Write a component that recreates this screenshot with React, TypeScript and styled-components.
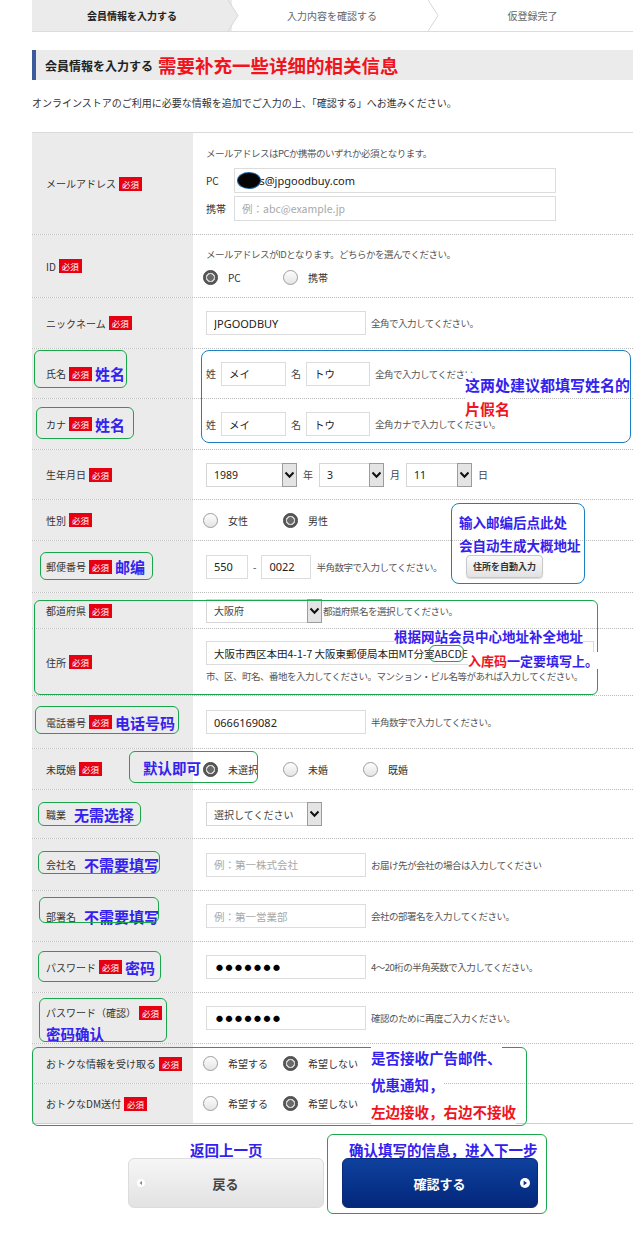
import React from "react";
import styled, { createGlobalStyle, css } from "styled-components";

const JP = `"Noto Sans CJK JP", "Noto Sans", sans-serif`;
const LATIN = `"Noto Sans", "Noto Sans CJK JP", sans-serif`;
const SC = `"Noto Sans CJK SC", "Noto Sans CJK JP", sans-serif`;
const BLUE = "#3322ee";
const RED = "#f0141e";

const GlobalStyle = createGlobalStyle`
  * { box-sizing: border-box; }
  html, body { margin: 0; padding: 0; background: #fff; }
  body { font-family: ${JP}; color: #333; overflow: hidden; }
`;

const Page = styled.div`
  position: relative;
  width: 633px;
  height: 1233px;
  overflow: hidden;
`;

const Main = styled.main`
  margin-left: 32px;
  width: 601px;
`;

/* ---------- stepper ---------- */
const Stepper = styled.ol`
  display: flex;
  margin: 0;
  padding: 0;
  list-style: none;
  height: 32px;
  border-bottom: 1px solid #dcdcdc;
`;

const Step = styled.li<{ $active?: boolean; $wide?: boolean }>`
  position: relative;
  flex: 0 0 ${(p) => (p.$wide ? 201 : 200)}px;
  display: flex;
  align-items: center;
  justify-content: center;
  background: ${(p) => (p.$active ? "#ebebeb" : "#fff")};
  font-size: 10px;
  font-weight: ${(p) => (p.$active ? 700 : 400)};
  color: ${(p) => (p.$active ? "#222" : "#666")};
  white-space: nowrap;
`;

const ChevronSvg = styled.svg`
  position: absolute;
  top: 0;
  left: calc(100% - 4px);
  width: 11px;
  height: 31px;
  z-index: 1;
`;

const Chevron = ({ fill }: { fill: string }) => (
  <ChevronSvg viewBox="0 0 11 31">
    <polygon points="0,0 10,15.5 0,31" fill={fill} />
    <polyline points="0,0 10,15.5 0,31" fill="none" stroke="#d8d8d8" strokeWidth="1" />
  </ChevronSvg>
);

/* ---------- heading ---------- */
const Heading = styled.h2`
  margin: 18px 0 0;
  height: 30px;
  display: flex;
  align-items: center;
  gap: 5px;
  background: #ebebeb;
  border-left: 4px solid #3b5b9a;
  padding-left: 9px;
  font-size: 12px;
  font-weight: 700;
  color: #222;
  white-space: nowrap;
`;

const HeadingNote = styled.span`
  font-family: ${SC};
  font-size: 18.5px;
  font-weight: 700;
  color: ${RED};
`;

const Intro = styled.p`
  margin: 16px 0 0;
  font-size: 10px;
  line-height: 14px;
  letter-spacing: 0;
  color: #333;
  white-space: nowrap;
`;

/* ---------- form table ---------- */
const FormTable = styled.div`
  margin-top: 22px;
  border-top: 1px solid #dadada;
  border-bottom: 1px solid #cfcfcf;
`;

const Row = styled.div<{ $h: number }>`
  display: grid;
  grid-template-columns: 161px 1fr;
  height: ${(p) => p.$h}px;
  border-bottom: 1px dotted #bcbcbc;
  &:last-child {
    border-bottom: none;
  }
`;

const Label = styled.div<{ $top?: number }>`
  background: #ebebeb;
  display: flex;
  align-items: ${(p) => (p.$top ? "flex-start" : "center")};
  padding-top: ${(p) => p.$top ?? 0}px;
  gap: 3px;
  padding-left: 14px;
  font-size: 10px;
  color: #333;
  white-space: nowrap;
`;

const LabelText = styled.span`
  line-height: 14px;
`;

const Badge = styled.span`
  display: inline-flex;
  align-items: center;
  justify-content: center;
  width: 23px;
  height: 14px;
  background: #e60012;
  color: #fff;
  font-size: 8.5px;
  flex: none;
`;

const Hint = styled.span<{ $space?: number }>`
  font-family: ${SC};
  font-weight: 700;
  font-size: 15px;
  color: ${BLUE};
  margin-left: ${(p) => p.$space ?? 0}px;
`;

const Value = styled.div<{ $gap?: number; $stack?: boolean }>`
  display: flex;
  flex-direction: ${(p) => (p.$stack ? "column" : "row")};
  align-items: ${(p) => (p.$stack ? "flex-start" : "center")};
  justify-content: ${(p) => (p.$stack ? "center" : "flex-start")};
  gap: ${(p) => p.$gap ?? 5}px;
  padding-left: 13px;
  font-size: 10px;
  color: #333;
  white-space: nowrap;
`;

const Note = styled.span<{ $after?: number }>`
  font-size: 9.5px;
  line-height: 14px;
  letter-spacing: -0.5px;
  color: #555;
  white-space: nowrap;
  margin-bottom: ${(p) => p.$after ?? 0}px;
`;

const Unit = styled.span`
  font-size: 10px;
  color: #444;
`;

const FieldLine = styled.div`
  display: flex;
  align-items: center;
`;

const SubLabel = styled.span`
  width: 28px;
  font-size: 10px;
  color: #333;
`;

const TextInput = styled.input<{ $w: number; $h?: number; $jp?: boolean }>`
  width: ${(p) => p.$w}px;
  height: ${(p) => p.$h ?? 24}px;
  border: 1px solid #dcdcdc;
  padding: 0 7px;
  font-family: ${(p) => (p.$jp ? JP : LATIN)};
  font-size: ${(p) => (p.$jp ? 10.5 : 11)}px;
  color: #222;
  background: #fff;
  outline: none;
  &::placeholder {
    color: #a8a8a8;
    font-family: ${JP};
    font-size: 10.5px;
  }
`;

const DotsInput = styled(TextInput)`
  font-family: ${JP};
  font-size: 7px;
  letter-spacing: 2.5px;
  padding-left: 9px;
  color: #000;
`;

const EmailField = styled.div`
  position: relative;
`;

const Redaction = styled.span`
  position: absolute;
  left: 4px;
  top: 5px;
  width: 22px;
  height: 15px;
  border-radius: 50%;
  background: #050505;
  box-shadow: 0 0 0 1px #1d5d9a;
`;

const SelectBox = styled.div<{ $w: number }>`
  display: flex;
  align-items: stretch;
  width: ${(p) => p.$w}px;
  height: 24px;
  border: 1px solid #d6d6d6;
  background: #fff;
  flex: none;
`;

const SelectValue = styled.span`
  flex: 1;
  display: flex;
  align-items: center;
  padding-left: 7px;
  font-family: ${LATIN};
  font-size: 10.5px;
  color: #222;
`;

const SelectArrow = styled.span`
  width: 15px;
  margin: -1px -1px -1px 0;
  display: flex;
  align-items: center;
  justify-content: center;
  background: #e4e4e4;
  border: 1px solid #9c9c9c;
`;

const Select = ({ w, children }: { w: number; children: React.ReactNode }) => (
  <SelectBox $w={w}>
    <SelectValue>{children}</SelectValue>
    <SelectArrow>
      <svg width="11" height="8" viewBox="0 0 11 8">
        <polyline points="1.5,1.5 5.5,5.8 9.5,1.5" fill="none" stroke="#111" strokeWidth="2" />
      </svg>
    </SelectArrow>
  </SelectBox>
);

const RadioGroup = styled.div`
  display: flex;
  margin-left: -3px;
`;

const RadioItem = styled.label`
  display: inline-flex;
  align-items: center;
  gap: 10px;
  width: 80px;
  font-size: 10px;
  color: #333;
`;

const RadioDot = styled.span<{ $checked?: boolean }>`
  width: 15px;
  height: 15px;
  border-radius: 50%;
  flex: none;
  ${(p) =>
    p.$checked
      ? css`
          border: 1px solid #3c3c3c;
          background: radial-gradient(circle, #6a6a6a 0 3px, #d2d2d2 3.6px 4.4px, #5a5a5a 5px);
        `
      : css`
          border: 1px solid #9d9d9d;
          background: linear-gradient(#fdfdfd, #e4e4e4);
        `}
`;

const Radios = ({ items, checked }: { items: string[]; checked: number }) => (
  <RadioGroup>
    {items.map((t, i) => (
      <RadioItem key={t}>
        <RadioDot $checked={i === checked} />
        {t}
      </RadioItem>
    ))}
  </RadioGroup>
);

const AutoButton = styled.button`
  margin-left: 19px;
  width: 77px;
  height: 23px;
  border: 1px solid #c8c8c8;
  border-radius: 4px;
  background: linear-gradient(#fbfbfb, #e2e2e2);
  box-shadow: 0 1px 1px rgba(0, 0, 0, 0.15);
  font-family: ${JP};
  font-size: 9px;
  font-weight: 700;
  color: #333;
  padding: 0;
`;

/* ---------- buttons ---------- */
const ButtonRow = styled.div`
  display: flex;
  justify-content: center;
  gap: 18px;
  margin-top: 34px;
`;

const NavButton = styled.button<{ $primary?: boolean }>`
  width: 196px;
  height: 50px;
  display: grid;
  grid-template-columns: 24px 1fr 24px;
  align-items: center;
  justify-items: center;
  border-radius: 6px;
  padding: 0;
  font-family: ${JP};
  font-size: 13px;
  font-weight: 700;
  ${(p) =>
    p.$primary
      ? css`
          border: 1px solid #062a78;
          background: linear-gradient(#0e419e, #03277a);
          color: #fff;
        `
      : css`
          border: 1px solid #dcdcdc;
          background: linear-gradient(#f6f6f6, #e2e2e2);
          color: #444;
        `}
`;

/* ---------- annotation overlay ---------- */
const Mark = styled.div<{ $x: number; $y: number; $w: number; $h: number; $blue?: boolean }>`
  position: absolute;
  left: ${(p) => p.$x}px;
  top: ${(p) => p.$y}px;
  width: ${(p) => p.$w}px;
  height: ${(p) => p.$h}px;
  border: 1.5px solid ${(p) => (p.$blue ? "#1b7fc1" : "#1aa64a")};
  border-radius: ${(p) => (p.$blue ? 8 : 6)}px;
  pointer-events: none;
`;

const Callout = styled.div<{ $x: number; $y: number; $size: number; $lh: number }>`
  position: absolute;
  left: ${(p) => p.$x}px;
  top: ${(p) => p.$y}px;
  display: flex;
  flex-direction: column;
  align-items: flex-start;
  font-family: ${SC};
  font-weight: 700;
  font-size: ${(p) => p.$size}px;
  line-height: ${(p) => p.$lh}px;
  color: ${BLUE};
  white-space: nowrap;
`;

const CLine = styled.span<{ $red?: boolean; $bg?: boolean }>`
  color: ${(p) => (p.$red ? RED : BLUE)};
  background: ${(p) => (p.$bg ? "#fff" : "transparent")};
`;

const Red = styled.span`
  color: ${RED};
`;

const marks: { x: number; y: number; w: number; h: number; blue?: boolean }[] = [
  { x: 34, y: 350, w: 93, h: 38 },
  { x: 36, y: 407, w: 98, h: 32 },
  { x: 201, y: 350, w: 430, h: 93, blue: true },
  { x: 451, y: 503, w: 134, h: 81, blue: true },
  { x: 40, y: 552, w: 113, h: 28 },
  { x: 34, y: 600, w: 564, h: 95 },
  { x: 429, y: 645, w: 35, h: 17 },
  { x: 35, y: 706, w: 144, h: 28 },
  { x: 129, y: 751, w: 129, h: 32 },
  { x: 38, y: 802, w: 103, h: 24 },
  { x: 38, y: 851, w: 122, h: 23 },
  { x: 39, y: 897, w: 120, h: 26 },
  { x: 38, y: 951, w: 123, h: 31 },
  { x: 39, y: 998, w: 128, h: 44 },
  { x: 32, y: 1047, w: 495, h: 79 },
  { x: 327, y: 1134, w: 220, h: 80 },
];

export default function App() {
  return (
    <Page>
      <GlobalStyle />
      <Main>
        <Stepper>
          <Step $active>
            会員情報を入力する
            <Chevron fill="#ebebeb" />
          </Step>
          <Step>
            入力内容を確認する
            <Chevron fill="#fff" />
          </Step>
          <Step $wide>仮登録完了</Step>
        </Stepper>

        <Heading>
          会員情報を入力する<HeadingNote>需要补充一些详细的相关信息</HeadingNote>
        </Heading>
        <Intro>オンラインストアのご利用に必要な情報を追加でご入力の上、「確認する」へお進みください。</Intro>

        <FormTable>
          <Row $h={102}>
            <Label>
              メールアドレス<Badge>必須</Badge>
            </Label>
            <Value $stack $gap={3}>
              <Note $after={5}>メールアドレスはPCか携帯のいずれか必須となります。</Note>
              <FieldLine>
                <SubLabel>PC</SubLabel>
                <EmailField>
                  <TextInput $w={322} $h={25} readOnly value="xxxs@jpgoodbuy.com" />
                  <Redaction />
                </EmailField>
              </FieldLine>
              <FieldLine>
                <SubLabel>携帯</SubLabel>
                <TextInput $w={322} $h={25} readOnly placeholder="例：abc@example.jp" />
              </FieldLine>
            </Value>
          </Row>

          <Row $h={63}>
            <Label>
              ID<Badge>必須</Badge>
            </Label>
            <Value $stack $gap={9}>
              <Note>メールアドレスがIDとなります。どちらかを選んでください。</Note>
              <Radios items={["PC", "携帯"]} checked={0} />
            </Value>
          </Row>

          <Row $h={51}>
            <Label>
              ニックネーム<Badge>必須</Badge>
            </Label>
            <Value>
              <TextInput $w={160} readOnly value="JPGOODBUY" />
              <Note>全角で入力してください。</Note>
            </Value>
          </Row>

          <Row $h={50}>
            <Label>
              氏名<Badge>必須</Badge>
              <Hint>姓名</Hint>
            </Label>
            <Value>
              <Unit>姓</Unit>
              <TextInput $w={65} $jp readOnly value="メイ" />
              <Unit>名</Unit>
              <TextInput $w={64} $jp readOnly value="トウ" />
              <Note>全角で入力してください。</Note>
            </Value>
          </Row>

          <Row $h={51}>
            <Label>
              カナ<Badge>必須</Badge>
              <Hint>姓名</Hint>
            </Label>
            <Value>
              <Unit>姓</Unit>
              <TextInput $w={65} $jp readOnly value="メイ" />
              <Unit>名</Unit>
              <TextInput $w={64} $jp readOnly value="トウ" />
              <Note>全角カナで入力してください。</Note>
            </Value>
          </Row>

          <Row $h={50}>
            <Label>
              生年月日<Badge>必須</Badge>
            </Label>
            <Value $gap={6}>
              <Select w={91}>1989</Select>
              <Unit>年</Unit>
              <Select w={65}>3</Select>
              <Unit>月</Unit>
              <Select w={66}>11</Select>
              <Unit>日</Unit>
            </Value>
          </Row>

          <Row $h={41}>
            <Label>
              性別<Badge>必須</Badge>
            </Label>
            <Value>
              <Radios items={["女性", "男性"]} checked={1} />
            </Value>
          </Row>

          <Row $h={52}>
            <Label>
              郵便番号<Badge>必須</Badge>
              <Hint>邮编</Hint>
            </Label>
            <Value>
              <TextInput $w={42} readOnly value="550" />
              <Unit>-</Unit>
              <TextInput $w={50} readOnly value="0022" />
              <Note>半角数字で入力してください。</Note>
              <AutoButton type="button">住所を自動入力</AutoButton>
            </Value>
          </Row>

          <Row $h={36}>
            <Label>
              都道府県<Badge>必須</Badge>
            </Label>
            <Value $gap={1}>
              <Select w={116}>
                <Unit>大阪府</Unit>
              </Select>
              <Note>都道府県名を選択してください。</Note>
            </Value>
          </Row>

          <Row $h={67}>
            <Label>
              住所<Badge>必須</Badge>
            </Label>
            <Value $stack $gap={4}>
              <TextInput $w={388} $jp readOnly value="大阪市西区本田4-1-7 大阪東郵便局本田MT分室ABCDE" />
              <Note>市、区、町名、番地を入力してください。マンション・ビル名等があれば入力してください。</Note>
            </Value>
          </Row>

          <Row $h={53}>
            <Label>
              電話番号<Badge>必須</Badge>
              <Hint>电话号码</Hint>
            </Label>
            <Value>
              <TextInput $w={160} readOnly value="0666169082" />
              <Note>半角数字で入力してください。</Note>
            </Value>
          </Row>

          <Row $h={41}>
            <Label>
              未既婚<Badge>必須</Badge>
            </Label>
            <Value>
              <Radios items={["未選択", "未婚", "既婚"]} checked={0} />
            </Value>
          </Row>

          <Row $h={49}>
            <Label>
              職業<Hint $space={5}>无需选择</Hint>
            </Label>
            <Value>
              <Select w={116}>
                <Unit>選択してください</Unit>
              </Select>
            </Value>
          </Row>

          <Row $h={52}>
            <Label>
              会社名<Hint $space={5}>不需要填写</Hint>
            </Label>
            <Value>
              <TextInput $w={160} readOnly placeholder="例：第一株式会社" />
              <Note>お届け先が会社の場合は入力してください</Note>
            </Value>
          </Row>

          <Row $h={51}>
            <Label>
              部署名<Hint $space={5}>不需要填写</Hint>
            </Label>
            <Value>
              <TextInput $w={160} readOnly placeholder="例：第一営業部" />
              <Note>会社の部署名を入力してください。</Note>
            </Value>
          </Row>

          <Row $h={51}>
            <Label>
              パスワード<Badge>必須</Badge>
              <Hint>密码</Hint>
            </Label>
            <Value>
              <DotsInput $w={160} readOnly value="●●●●●●●" />
              <Note>4～20桁の半角英数で入力してください。</Note>
            </Value>
          </Row>

          <Row $h={51}>
            <Label $top={13}>
              <LabelText>パスワード（確認）</LabelText>
              <Badge>必須</Badge>
            </Label>
            <Value>
              <DotsInput $w={160} readOnly value="●●●●●●●" />
              <Note>確認のために再度ご入力ください。</Note>
            </Value>
          </Row>

          <Row $h={40}>
            <Label>
              おトクな情報を受け取る<Badge>必須</Badge>
            </Label>
            <Value>
              <Radios items={["希望する", "希望しない"]} checked={1} />
            </Value>
          </Row>

          <Row $h={39}>
            <Label>
              おトクなDM送付<Badge>必須</Badge>
            </Label>
            <Value>
              <Radios items={["希望する", "希望しない"]} checked={1} />
            </Value>
          </Row>
        </FormTable>

        <ButtonRow>
          <NavButton type="button">
            <svg width="8" height="8" viewBox="0 0 8 8">
              <circle cx="4" cy="4" r="4" fill="#fff" />
              <polygon points="5,2 2.5,4 5,6" fill="#888" />
            </svg>
            <span>戻る</span>
            <span />
          </NavButton>
          <NavButton type="button" $primary>
            <span />
            <span>確認する</span>
            <svg width="10" height="10" viewBox="0 0 10 10">
              <circle cx="5" cy="5" r="5" fill="#fff" />
              <polygon points="3.6,2.6 7,5 3.6,7.4" fill="#0a3388" />
            </svg>
          </NavButton>
        </ButtonRow>
      </Main>

      {marks.map((m, i) => (
        <Mark key={i} $x={m.x} $y={m.y} $w={m.w} $h={m.h} $blue={m.blue} />
      ))}

      <Callout $x={465} $y={373} $size={15} $lh={24}>
        <CLine $bg>这两处建议都填写姓名的</CLine>
        <CLine $red $bg>片假名</CLine>
      </Callout>
      <Callout $x={459} $y={511} $size={13.5} $lh={23}>
        <CLine>输入邮编后点此处</CLine>
        <CLine>会自动生成大概地址</CLine>
      </Callout>
      <Callout $x={394} $y={629} $size={13.5} $lh={15}>
        <CLine $bg>根据网站会员中心地址补全地址</CLine>
      </Callout>
      <Callout $x={468} $y={652} $size={13} $lh={17}>
        <CLine $bg>
          <Red>入库码</Red>一定要填写上。
        </CLine>
      </Callout>
      <Callout $x={143} $y={759} $size={14.5} $lh={18}>
        <CLine>默认即可</CLine>
      </Callout>
      <Callout $x={46} $y={1025} $size={14.5} $lh={17}>
        <CLine>密码确认</CLine>
      </Callout>
      <Callout $x={371} $y={1044} $size={14.5} $lh={27}>
        <CLine $bg>是否接收广告邮件、</CLine>
        <CLine $bg>优惠通知，</CLine>
        <CLine $red $bg>左边接收，右边不接收</CLine>
      </Callout>
      <Callout $x={190} $y={1141} $size={14.5} $lh={18}>
        <CLine>返回上一页</CLine>
      </Callout>
      <Callout $x={349} $y={1141} $size={14.5} $lh={18}>
        <CLine>确认填写的信息，进入下一步</CLine>
      </Callout>
    </Page>
  );
}
